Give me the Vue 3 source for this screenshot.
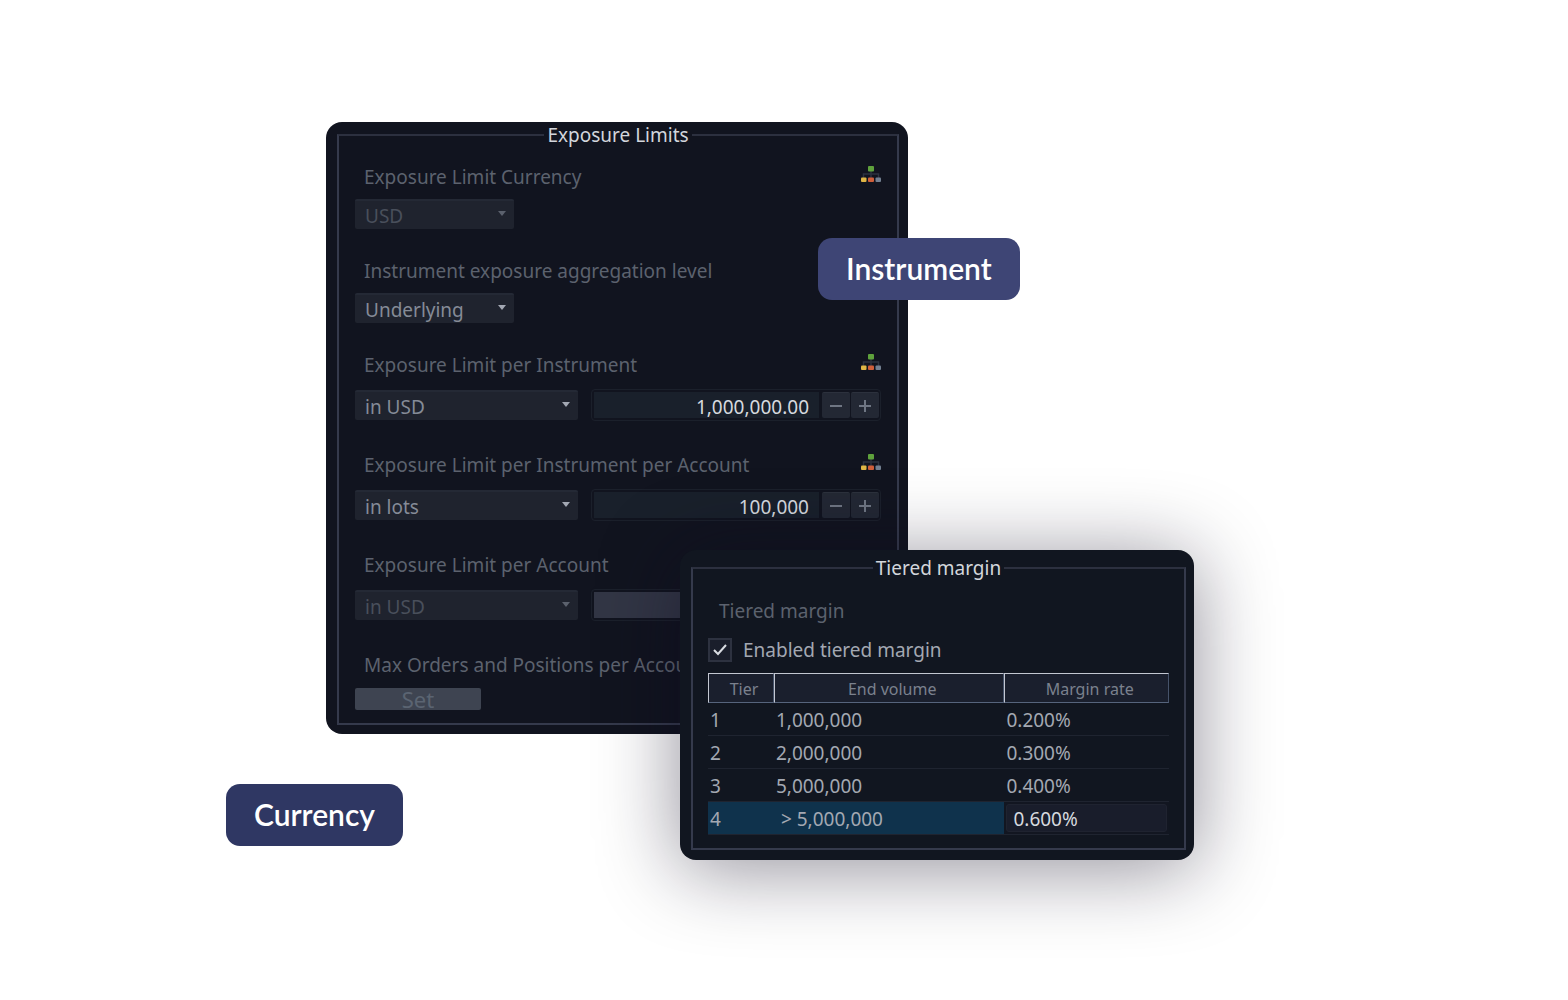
<script setup>
import { ref } from 'vue'

const limitCurrency = ref('USD')
const aggregationLevel = ref('Underlying')

const limits = ref([
  { id: 'instrument', label: 'Exposure Limit per Instrument', unit: 'in USD', value: '1,000,000.00', decimals: 2, inherited: true, disabled: false },
  { id: 'instrument-account', label: 'Exposure Limit per Instrument per Account', unit: 'in lots', value: '100,000', decimals: 0, inherited: true, disabled: false },
  { id: 'account', label: 'Exposure Limit per Account', unit: 'in USD', value: '', decimals: 2, inherited: false, disabled: true }
])

const tieredEnabled = ref(true)
const lastRate = ref('0.600%')

const tiers = [
  { tier: 1, volume: '1,000,000', rate: '0.200%' },
  { tier: 2, volume: '2,000,000', rate: '0.300%' },
  { tier: 3, volume: '5,000,000', rate: '0.400%' }
]

const step = (limit, delta) => {
  const next = Math.max(0, Number(limit.value.replace(/,/g, '')) + delta)
  limit.value = next.toLocaleString('en-US', {
    minimumFractionDigits: limit.decimals,
    maximumFractionDigits: limit.decimals
  })
}
</script>

<template>
  <main class="scene">
    <section class="panel exposure">
      <fieldset class="group">
        <legend>Exposure Limits</legend>

        <div class="field">
          <div class="field-head">
            <label for="limit-currency">Exposure Limit Currency</label>
            <svg class="tree-icon" viewBox="0 0 20 17" aria-hidden="true">
              <path d="M10 5v7M2.500 12V8h15v4" fill="none" stroke="#2c3240" stroke-width="1.500" />
              <rect x="7" y="0" width="6" height="5.500" rx="1" fill="#5fa23c" />
              <rect x="0" y="11.500" width="5.500" height="4.500" rx="1" fill="#dfb645" />
              <rect x="7" y="11.500" width="6" height="4.500" rx="1" fill="#cf5f3a" />
              <rect x="14.500" y="11.500" width="5.500" height="4.500" rx="1" fill="#738091" />
            </svg>
          </div>
          <span class="select short is-disabled">
            <select id="limit-currency" v-model="limitCurrency" disabled>
              <option>USD</option>
            </select>
          </span>
        </div>

        <div class="field">
          <div class="field-head">
            <label for="aggregation">Instrument exposure aggregation level</label>
          </div>
          <span class="select short">
            <select id="aggregation" v-model="aggregationLevel">
              <option>Underlying</option>
              <option>Instrument</option>
            </select>
          </span>
        </div>

        <div v-for="limit in limits" :key="limit.id" class="field limit">
          <div class="field-head">
            <label :for="limit.id">{{ limit.label }}</label>
            <svg v-if="limit.inherited" class="tree-icon" viewBox="0 0 20 17" aria-hidden="true">
              <path d="M10 5v7M2.500 12V8h15v4" fill="none" stroke="#2c3240" stroke-width="1.500" />
              <rect x="7" y="0" width="6" height="5.500" rx="1" fill="#5fa23c" />
              <rect x="0" y="11.500" width="5.500" height="4.500" rx="1" fill="#dfb645" />
              <rect x="7" y="11.500" width="6" height="4.500" rx="1" fill="#cf5f3a" />
              <rect x="14.500" y="11.500" width="5.500" height="4.500" rx="1" fill="#738091" />
            </svg>
          </div>
          <div class="limit-row">
            <span class="select" :class="{ 'is-disabled': limit.disabled }">
              <select v-model="limit.unit" :disabled="limit.disabled" :aria-label="limit.label + ' unit'">
                <option>in USD</option>
                <option>in lots</option>
              </select>
            </span>
            <div class="spinner" :class="{ 'is-disabled': limit.disabled }">
              <input :id="limit.id" v-model="limit.value" type="text" :disabled="limit.disabled" />
              <template v-if="!limit.disabled">
                <button type="button" aria-label="Decrease" @click="step(limit, -1)">
                  <svg viewBox="0 0 12 12"><path d="M0 6h12" /></svg>
                </button>
                <button type="button" aria-label="Increase" @click="step(limit, 1)">
                  <svg viewBox="0 0 12 12"><path d="M0 6h12M6 0v12" /></svg>
                </button>
              </template>
            </div>
          </div>
        </div>

        <div class="field-head last">
          <label for="max-orders">Max Orders and Positions per Account</label>
        </div>
        <button id="max-orders" type="button" class="set-button" disabled>Set</button>
      </fieldset>
    </section>

    <div class="tag tag-instrument">Instrument</div>
    <div class="tag tag-currency">Currency</div>

    <section class="panel tiered">
      <fieldset class="group">
        <legend>Tiered margin</legend>
        <p class="caption">Tiered margin</p>
        <label class="check">
          <input v-model="tieredEnabled" type="checkbox" />
          <svg v-if="tieredEnabled" class="check-mark" viewBox="0 0 24 24" aria-hidden="true">
            <path d="M6 12l4 4 8-9" />
          </svg>
          Enabled tiered margin
        </label>

        <table>
          <thead>
            <tr>
              <th class="col-tier">Tier</th>
              <th class="col-volume">End volume</th>
              <th class="col-rate">Margin rate</th>
            </tr>
          </thead>
          <tbody>
            <tr v-for="row in tiers" :key="row.tier">
              <td>{{ row.tier }}</td>
              <td>{{ row.volume }}</td>
              <td>{{ row.rate }}</td>
            </tr>
            <tr class="selected">
              <td>4</td>
              <td class="open-ended">&gt; 5,000,000</td>
              <td class="editing">
                <input v-model="lastRate" type="text" aria-label="Margin rate for tier 4" />
              </td>
            </tr>
          </tbody>
        </table>
      </fieldset>
    </section>
  </main>
</template>

<style>
body {
  background: #fff;
}
</style>

<style scoped>
/* Overlapping cards share one grid row and are spread over proportional columns */
.scene {
  display: grid;
  grid-template-columns:
    minmax(0, 226fr) minmax(0, 100fr) minmax(0, 354fr) minmax(0, 138fr)
    minmax(0, 90fr) minmax(0, 286fr) minmax(0, 374fr);
  align-items: start;
  min-height: 100vh;
  box-sizing: border-box;
  font-family: "Noto Sans", "Open Sans", sans-serif;
  font-size: 19px;
  line-height: 24px;
  color: #a3a8b2;
}

.scene > * {
  grid-row: 1;
}

.panel {
  border-radius: 16px;
}

.exposure {
  grid-column: 3 / 6;
  margin-top: 122px;
  padding: 1px 9px 9px 11px;
  background: #11141f;
}

.tiered {
  grid-column: 4 / 7;
  margin-top: 550px;
  padding: 6px 8px 10px 11px;
  background: #111620;
  box-shadow: 0 8px 80px 2px rgba(14, 8, 32, 0.44);
}

.group {
  min-width: 0;
  margin: 0;
  padding: 18px 16px 13px;
  border: 2px solid #353a4c;
  border-top-color: #2c303f;
}

legend {
  margin: 0 auto;
  padding: 0 3px;
  color: #d3d6dc;
}

.field {
  margin-bottom: 30px;
}

.field-head {
  display: flex;
  justify-content: space-between;
  margin-bottom: 10px;
  padding-left: 9px;
  color: #5c626e;
  white-space: nowrap;
}

.field.limit {
  margin-bottom: 32px;
}

.limit .field-head {
  margin-bottom: 12px;
}

.tree-icon {
  width: 20px;
  height: 17px;
  margin-top: 1px;
}

.limit-row {
  display: grid;
  grid-template-columns: minmax(0, 223fr) minmax(0, 290fr);
  align-items: center;
  gap: 13px;
}

.select {
  display: block;
  position: relative;
}

.select.short {
  width: 159px;
}

.select::after {
  content: "";
  position: absolute;
  top: 12px;
  right: 8px;
  border: 4px solid transparent;
  border-top: 5px solid #a3a8b3;
  border-bottom: 0;
  pointer-events: none;
}

.select.is-disabled::after {
  border-top-color: #5b616d;
}

select {
  display: block;
  appearance: none;
  width: 100%;
  height: 30px;
  margin: 0;
  padding: 1px 24px 0 10px;
  border: 0;
  border-top: 2px solid #242935;
  border-radius: 2px;
  background: #1f232e;
  color: #858b97;
  font: inherit;
  line-height: 24px;
}

select:disabled {
  color: #494f5b;
  opacity: 1;
}

.spinner {
  display: flex;
  gap: 1px;
  height: 32px;
  box-sizing: border-box;
  padding: 2px 1px 2px 2px;
  border: 1px solid #1b202b;
  border-radius: 4px;
}

.spinner input {
  flex: 1;
  min-width: 0;
  margin-right: 2px;
  padding: 3px 10px 0;
  border: 0;
  background: #19202b;
  color: #d5d9df;
  font: inherit;
  text-align: right;
}

.spinner.is-disabled input {
  margin-right: 0;
  background: #323645;
}

.spinner button {
  width: 28px;
  padding: 0;
  border: 0;
  border-top: 1px solid #2c313d;
  border-radius: 2px;
  background: #232834;
}

.spinner svg {
  display: block;
  width: 12px;
  height: 12px;
  margin: 0 auto;
  fill: none;
  stroke: #6f7683;
  stroke-width: 2;
}

.last {
  margin-bottom: 11px;
}

.set-button {
  display: block;
  width: 126px;
  height: 22px;
  padding: 0;
  border: 0;
  border-radius: 2px;
  background: #3e4451;
  color: #5b6472;
  font: inherit;
  font-size: 22px;
  line-height: 22px;
}

.tag {
  justify-self: start;
  box-sizing: border-box;
  height: 62px;
  padding: 0 28px;
  border-radius: 14px;
  color: #fff;
  font-family: Lato, sans-serif;
  font-size: 30px;
  font-weight: 600;
  line-height: 60px;
  white-space: nowrap;
}

.tag-instrument {
  grid-column: 5 / 7;
  margin-top: 238px;
  background: #3e4575;
}

.tag-currency {
  grid-column: 2 / 4;
  margin-top: 784px;
  background: #2f3763;
}

.caption {
  margin: 1px 0 15px 11px;
  color: #5c626e;
}

.check {
  display: flex;
  position: relative;
  align-items: center;
  gap: 11px;
  margin-bottom: 11px;
}

.check input {
  appearance: none;
  width: 24px;
  height: 24px;
  margin: 0;
  border: 2px solid #2d3240;
  background: #1a1e2b;
}

.check-mark {
  position: absolute;
  top: 0;
  left: 0;
  width: 24px;
  height: 24px;
  fill: none;
  stroke: #d9dce2;
  stroke-width: 2;
  pointer-events: none;
}

.tiered .group {
  padding-right: 15px;
  padding-left: 15px;
}

table {
  width: 100%;
  table-layout: fixed;
  border-collapse: separate;
  border-spacing: 0;
}

th {
  height: 30px;
  box-sizing: border-box;
  padding: 2px 0 0 6px;
  border: 1px solid;
  border-color: #c3c7d1 #46536a #56647c #c3c7d1;
  background: #1a1f2d;
  color: #7b818d;
  font-size: 16px;
  font-weight: 400;
}

.col-tier {
  width: 14.3%;
}

.col-volume {
  width: 50%;
}

.col-rate {
  width: 35.7%;
}

td {
  height: 33px;
  box-sizing: border-box;
  padding: 1px 2px 0;
  border-bottom: 1px solid #1f2430;
}

.selected td {
  background: #0f324c;
}

td.open-ended {
  padding-left: 7px;
}

.selected td.editing {
  padding: 2px;
  background: #121621;
}

.editing input {
  display: block;
  width: 100%;
  height: 28px;
  box-sizing: border-box;
  padding: 1px 6px 0;
  border: 1px solid #1f2330;
  border-radius: 3px;
  background: #191d2b;
  color: #d5d9df;
  font: inherit;
}
</style>
